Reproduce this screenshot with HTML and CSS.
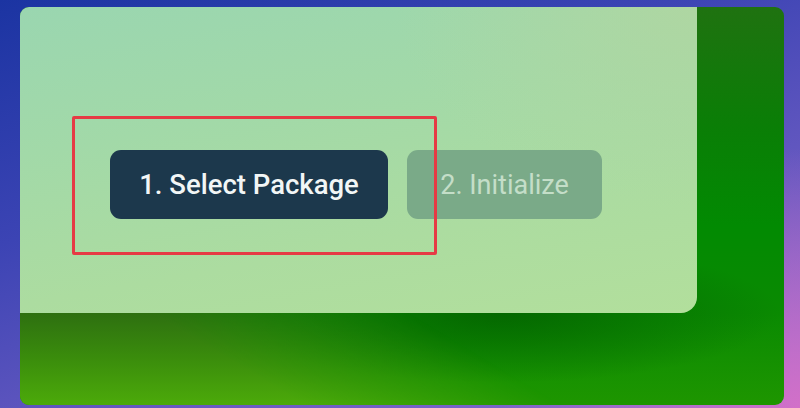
FILE: index.html
```html
<!DOCTYPE html>
<html>
<head>
<meta charset="utf-8">
<link rel="stylesheet" href="styles.css">
</head>
<body>
<div class="window">
  <div class="panel">
    <div class="steps">
      <button class="step step-active">1. Select Package</button>
      <button class="step step-disabled">2. Initialize</button>
      <div class="highlight"></div>
    </div>
  </div>
</div>
</body>
</html>
```
FILE: styles.css
```css
html, body {
  margin: 0;
  padding: 0;
}
body {
  width: 800px;
  height: 408px;
  overflow: hidden;
  font-family: Roboto, "Noto Sans", sans-serif;
  background:
    radial-gradient(ellipse 300px 260px at 800px 408px, rgba(214,112,200,0.95), rgba(214,112,200,0) 100%),
    linear-gradient(160deg, #1b34a2 0%, #3c44b4 35%, #6458c0 65%, #8a6ed0 100%);
  display: flex;
  align-items: flex-start;
}
.window {
  position: relative;
  margin: 7px 0 0 20px;
  width: 764px;
  height: 398px;
  border-radius: 9px;
  overflow: hidden;
  background:
    radial-gradient(ellipse 280px 70px at 480px 306px, rgba(4,102,0,0.95), rgba(4,102,0,0) 100%),
    linear-gradient(180deg, #1f7210 0%, #0a7e06 30%, #028a02 55%, #0a8a02 77%, #1e9600 100%);
}
.window::before {
  content: "";
  position: absolute;
  inset: 0;
  background: linear-gradient(180deg, #2a6c10 0%, #2e7010 77%, #3a8c0c 88%, #4caa0a 100%);
  -webkit-mask-image: linear-gradient(31deg, #000 20%, rgba(0,0,0,0) 38%);
  mask-image: linear-gradient(31deg, #000 20%, rgba(0,0,0,0) 38%);
}
.panel {
  position: relative;
  z-index: 1;
  width: 677px;
  height: 306px;
  border-radius: 0 0 16px 0;
  background:
    radial-gradient(ellipse 300px 200px at 677px 0px, rgba(178,214,160,0.8), rgba(178,214,160,0) 100%),
    linear-gradient(170deg, #9ad6b0 0%, #a2d9a8 35%, #acdca0 70%, #b2df9c 100%);
  box-sizing: border-box;
  padding: 143px 0 0 90px;
}
.steps {
  position: relative;
  display: flex;
  gap: 19px;
}
.step {
  height: 69px;
  border: none;
  border-radius: 11px;
  font-family: Roboto, "Noto Sans", sans-serif;
  font-size: 27.5px;
  font-weight: 500;
  display: flex;
  align-items: center;
  justify-content: center;
  padding: 0;
}
.step-active {
  width: 278px;
  background: #1c384c;
  color: #f2f6f6;
}
.step-disabled {
  width: 195px;
  background: #7aaa88;
  color: #c4dec8;
  font-size: 27px;
  font-weight: 400;
}
.highlight {
  position: absolute;
  left: -38px;
  top: -34px;
  width: 359px;
  height: 133px;
  border: 3.5px solid #e63a44;
  border-radius: 2px;
}
```
